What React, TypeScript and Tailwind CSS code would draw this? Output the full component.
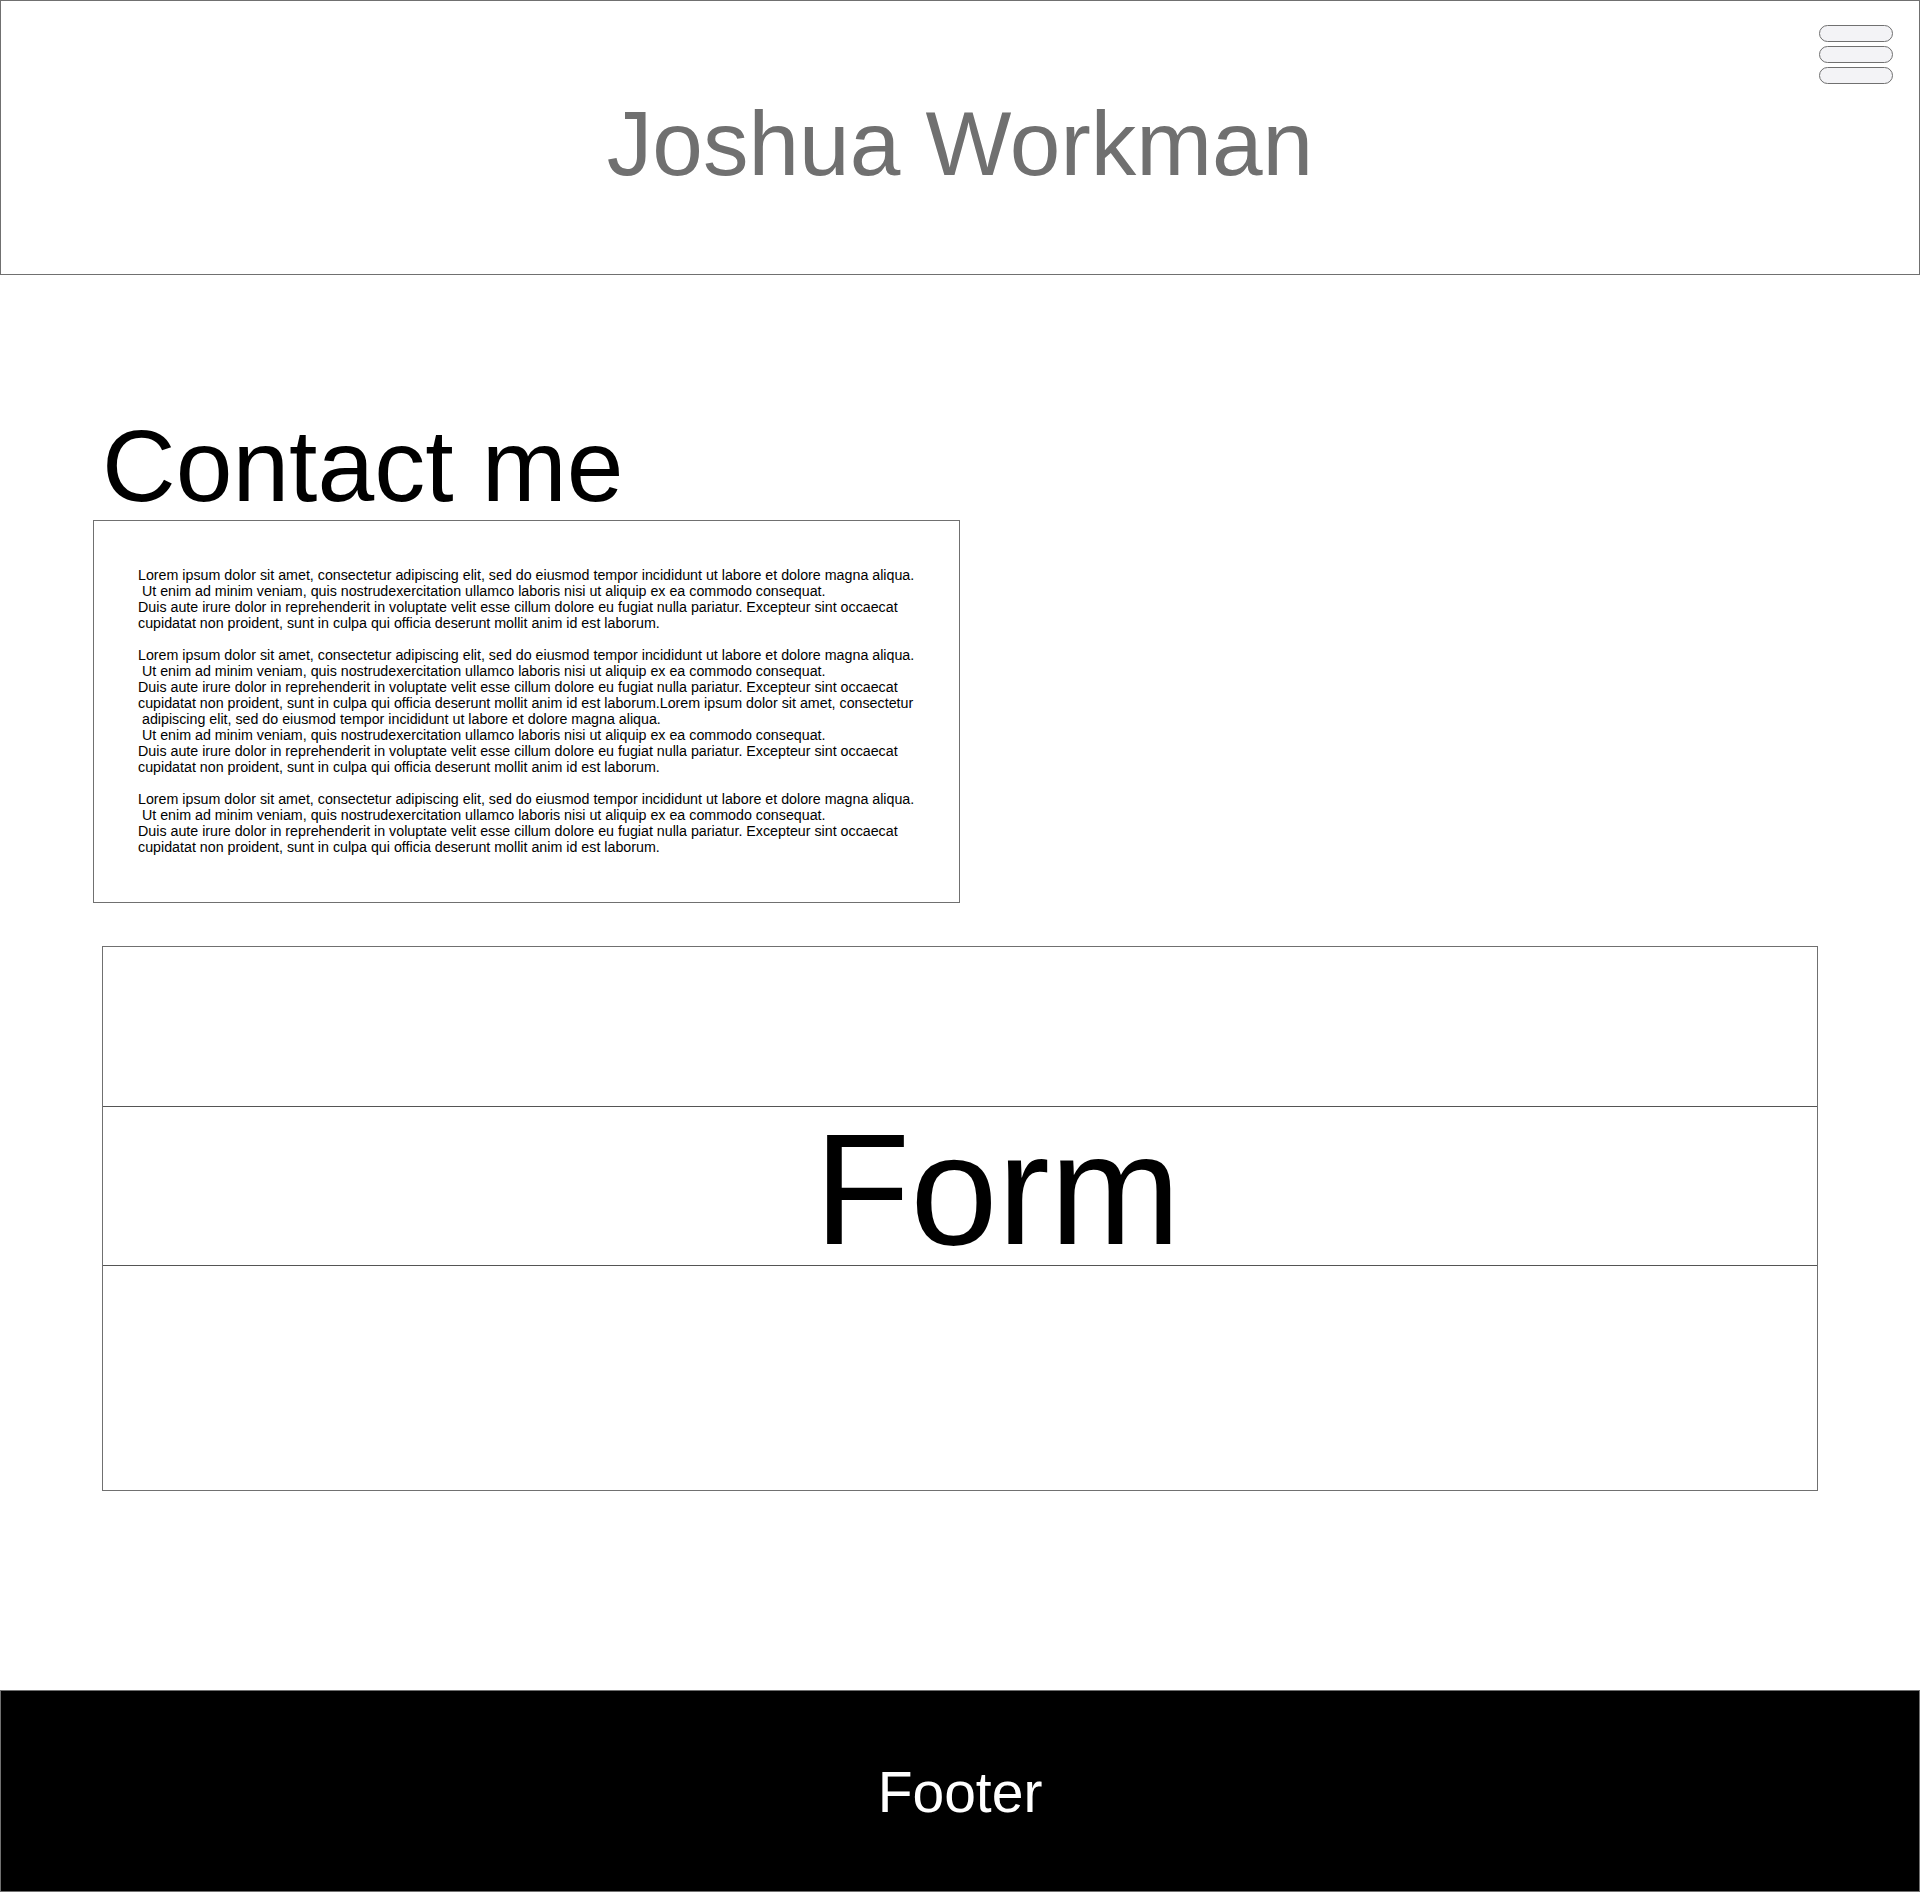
const LOREM_BLOCK = `Lorem ipsum dolor sit amet, consectetur adipiscing elit, sed do eiusmod tempor incididunt ut labore et dolore magna aliqua.
 Ut enim ad minim veniam, quis nostrudexercitation ullamco laboris nisi ut aliquip ex ea commodo consequat.
Duis aute irure dolor in reprehenderit in voluptate velit esse cillum dolore eu fugiat nulla pariatur. Excepteur sint occaecat
cupidatat non proident, sunt in culpa qui officia deserunt mollit anim id est laborum.

Lorem ipsum dolor sit amet, consectetur adipiscing elit, sed do eiusmod tempor incididunt ut labore et dolore magna aliqua.
 Ut enim ad minim veniam, quis nostrudexercitation ullamco laboris nisi ut aliquip ex ea commodo consequat.
Duis aute irure dolor in reprehenderit in voluptate velit esse cillum dolore eu fugiat nulla pariatur. Excepteur sint occaecat
cupidatat non proident, sunt in culpa qui officia deserunt mollit anim id est laborum.Lorem ipsum dolor sit amet, consectetur
 adipiscing elit, sed do eiusmod tempor incididunt ut labore et dolore magna aliqua.
 Ut enim ad minim veniam, quis nostrudexercitation ullamco laboris nisi ut aliquip ex ea commodo consequat.
Duis aute irure dolor in reprehenderit in voluptate velit esse cillum dolore eu fugiat nulla pariatur. Excepteur sint occaecat
cupidatat non proident, sunt in culpa qui officia deserunt mollit anim id est laborum.

Lorem ipsum dolor sit amet, consectetur adipiscing elit, sed do eiusmod tempor incididunt ut labore et dolore magna aliqua.
 Ut enim ad minim veniam, quis nostrudexercitation ullamco laboris nisi ut aliquip ex ea commodo consequat.
Duis aute irure dolor in reprehenderit in voluptate velit esse cillum dolore eu fugiat nulla pariatur. Excepteur sint occaecat
cupidatat non proident, sunt in culpa qui officia deserunt mollit anim id est laborum.`;

/* ───────── Header ───────── */

function Header() {
  return (
    <header className="relative h-[275px] border border-[#707070] bg-white">
      <h1 className="pt-[97px] text-center text-[91px] leading-none font-normal text-[#707070]">
        Joshua Workman
      </h1>
      <button
        aria-label="Menu"
        className="absolute right-[26px] top-[24px] flex flex-col gap-[4px]"
      >
        <span className="block h-[17px] w-[74px] rounded-full border border-[#707070] bg-[#f3f3f6]" />
        <span className="block h-[17px] w-[74px] rounded-full border border-[#707070] bg-[#f3f3f6]" />
        <span className="block h-[17px] w-[74px] rounded-full border border-[#707070] bg-[#f3f3f6]" />
      </button>
    </header>
  );
}

/* ───────── Page ───────── */

export default function App() {
  return (
    <div className="min-h-[1892px] bg-white font-['Liberation_Sans',Arial,sans-serif] text-black">
      <Header />

      <main>
        {/* ─── Contact intro ─── */}
        <h2 className="ml-[102px] mt-[140px] text-[102px] leading-none font-normal">
          Contact me
        </h2>
        <div className="ml-[93px] mt-[3px] h-[383px] w-[867px] border border-[#707070] pl-[44px] pt-[46px]">
          <p className="whitespace-pre text-[14.25px] leading-[16px]">{LOREM_BLOCK}</p>
        </div>

        {/* ─── Form placeholder ─── */}
        <section className="ml-[102px] mt-[43px] w-[1716px] border border-[#707070]">
          <div className="h-[159px]" />
          <div className="flex h-[159px] justify-center border-t border-[#555555] pl-[75px] pt-[4px]">
            <span className="text-[157px] leading-none">Form</span>
          </div>
          <div className="h-[225px] border-t border-[#555555]" />
        </section>
      </main>

      <footer className="mt-[199px] h-[202px] border border-[#707070] bg-black pt-[73px] text-center">
        <span className="text-[57px] leading-none text-white">Footer</span>
      </footer>
    </div>
  );
}
